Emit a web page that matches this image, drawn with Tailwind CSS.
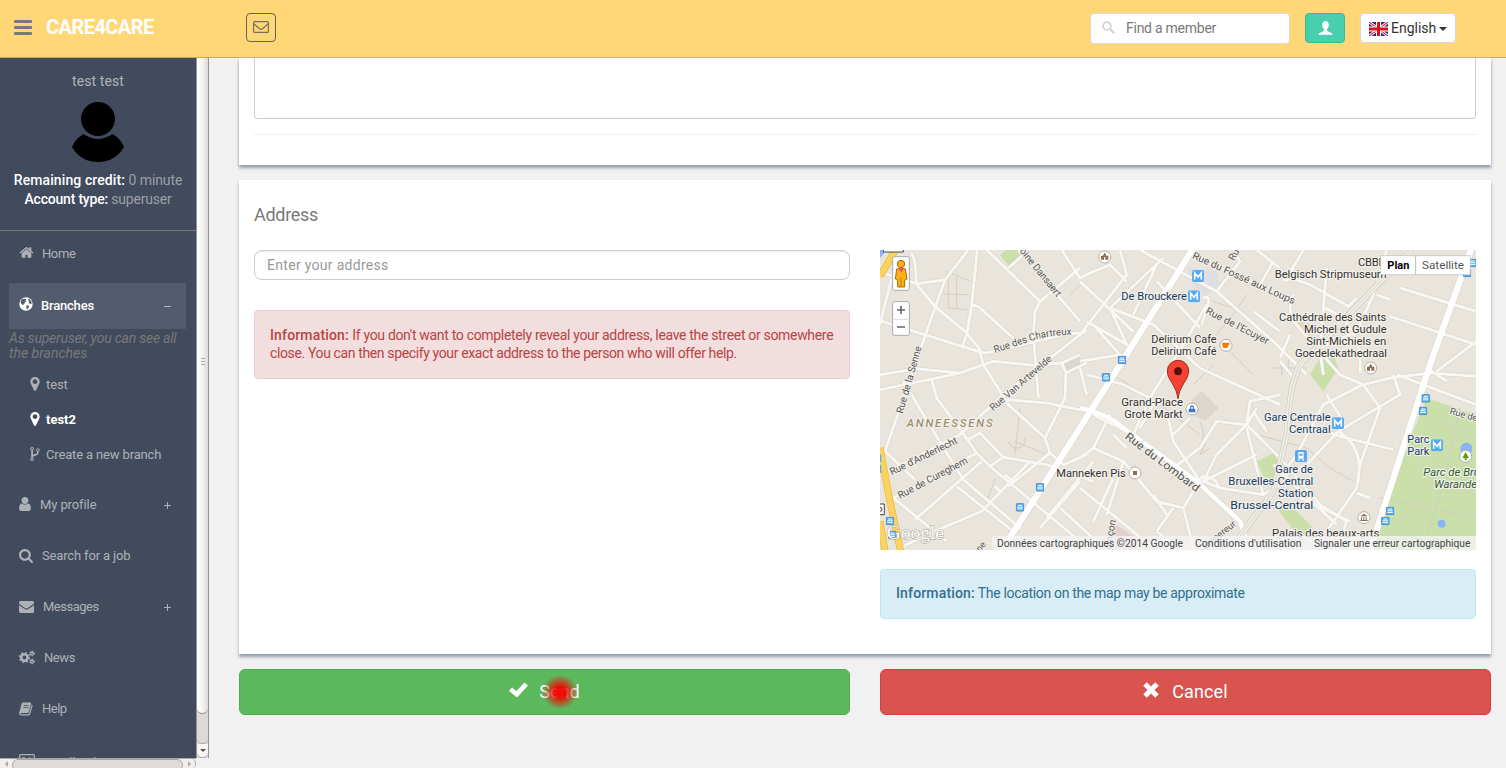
<!DOCTYPE html>
<html lang="en">
<head>
<meta charset="utf-8">
<title>Care4Care</title>
<script src="https://cdn.jsdelivr.net/npm/@tailwindcss/browser@4"></script>
</head>
<body class="h-[768px] w-[1506px] overflow-hidden bg-[#f1f1f1] font-[Roboto,sans-serif] text-sm text-[#797979]">
<svg class="hidden">
  <defs>
    <symbol id="home" viewBox="0 128 1792 1536"><path d="M1472 992v480q0 26-19 45t-45 19h-384v-384h-256v384h-384q-26 0-45-19t-19-45v-480q0-1 .5-3t.5-3l575-474 575 474q1 2 1 6zm223-69l-62 74q-8 9-21 11h-3q-13 0-21-7l-692-577-692 577q-12 8-24 7-13-2-21-11l-62-74q-8-10-7-23.5t11-21.5l719-599q32-26 76-26t76 26l244 204v-195q0-14 9-23t23-9h192q14 0 23 9t9 23v408l219 182q10 8 11 21.5t-7 23.5z"/></symbol>
    <symbol id="marker" viewBox="384 128 1024 1536"><path d="M1152 640q0-106-75-181t-181-75-181 75-75 181 75 181 181 75 181-75 75-181zm256 0q0 109-33 179l-364 774q-16 33-47.500 52t-67.500 19-67.500-19-46.500-52l-365-774q-33-70-33-179 0-212 150-362t362-150 362 150 150 362z"/></symbol>
    <symbol id="fork" viewBox="384 128 1024 1536"><path d="M672 1472q0-40-28-68t-68-28-68 28-28 68 28 68 68 28 68-28 28-68zm0-1152q0-40-28-68t-68-28-68 28-28 68 28 68 68 28 68-28 28-68zm640 128q0-40-28-68t-68-28-68 28-28 68 28 68 68 28 68-28 28-68zm96 0q0 52-26 96.500t-70 69.500q-2 287-226 414-67 38-203 81-128 40-169.500 71t-41.500 100v26q44 25 70 69.500t26 96.500q0 80-56 136t-136 56-136-56-56-136q0-52 26-96.500t70-69.500v-820q-44-25-70-69.500t-26-96.500q0-80 56-136t136-56 136 56 56 136q0 52-26 96.500t-70 69.500v497q54-26 154-57 55-17 87.500-29.500t70.500-31 59-39.500 40.500-51 28-69.500 8.500-91.500q-44-25-70-69.500t-26-96.500q0-80 56-136t136-56 136 56 56 136z"/></symbol>
    <symbol id="user" viewBox="256 128 1280 1536"><path d="M1536 1399q0 109-62.500 187t-150.500 78h-854q-88 0-150.500-78t-62.500-187q0-85 8.500-160.500t31.500-152 58.500-131 94-89 134.500-34.500q131 128 313 128t313-128q76 0 134.500 34.500t94 89 58.500 131 31.500 152 8.500 160.500zm-256-887q0 159-112.500 271.500t-271.500 112.500-271.500-112.500-112.500-271.500 112.500-271.500 271.500-112.500 271.500 112.500 112.500 271.500z"/></symbol>
    <symbol id="search" viewBox="64 128 1664 1664"><path d="M1216 832q0-185-131.500-316.500t-316.500-131.500-316.500 131.500-131.500 316.500 131.500 316.500 316.500 131.500 316.500-131.500 131.500-316.500zm512 832q0 52-38 90t-90 38q-54 0-90-38l-343-342q-179 124-399 124-143 0-273.500-55.500t-225-150-150-225-55.500-273.500 55.500-273.500 150-225 225-150 273.500-55.500 273.500 55.500 225 150 150 225 55.500 273.500q0 220-124 399l343 343q37 37 37 90z"/></symbol>
    <symbol id="envelope" viewBox="0 256 1792 1408"><path d="M1792 710v794q0 66-47 113t-113 47h-1472q-66 0-113-47t-47-113v-794q44 49 101 87 362 246 497 345 57 42 92.500 65.500t94.500 48 110 24.500h2q51 0 110-24.500t94.500-48 92.500-65.500q170-123 498-345 57-39 100-87zm0-294q0 79-49 151t-122 123q-376 261-468 325-10 7-42.500 31t-54 38.500-52 32.500-57.500 27-50 9h-2q-23 0-50-9t-57.500-27-52-32.500-54-38.500-42.500-31q-91-64-262-182.500t-205-142.500q-62-42-117-115.500t-55-136.500q0-78 41.500-130t118.500-52h1472q65 0 112.500 47t47.500 113z"/></symbol>
    <symbol id="globe" viewBox="0 0 14 14"><circle cx="7" cy="7" r="6.700"/><path fill="#535b6e" d="M2.600 2.600 4 1.700l1.200.4 1-.6 1.100.7-.9 1 .9.900-1.500 1.400-.2 1.200-1.300.3.400 1.100L3.600 8 2 6.200 1.700 4.200zM8.800 2l1.900.2 1.600 2 .5 2.300-1.600.4-1.300-.9-.3-1.400 1-.9L9 3.100zM7.400 8.300l1.800.2.900 1-1 2-1.300 1-.5-2.200z"/></symbol>
    <symbol id="cogs" viewBox="0 0 16 14"><g fill="none" stroke="currentColor"><circle cx="5.400" cy="7" r="3.200" stroke-width="2.600"/><circle cx="5.400" cy="7" r="4.900" stroke-width="1.300" stroke-dasharray="1.900 1.950"/><circle cx="13" cy="3" r="1.500" stroke-width="1.300"/><circle cx="13" cy="3" r="2.400" stroke-width=".8" stroke-dasharray="1.250 1.250"/><circle cx="13" cy="11" r="1.500" stroke-width="1.300"/><circle cx="13" cy="11" r="2.400" stroke-width=".8" stroke-dasharray="1.250 1.250"/></g></symbol>
    <symbol id="book" viewBox="0 0 14 14"><path fill-rule="evenodd" d="M4.200.5h7.200q1 0 .7 1L9.700 10q-.3 1-1.300 1H2q-.8 0-.6.700.2.600 1 .6h6.700q.7 0 .9-.7l2.500-8.300q.1-.4 0-.8 1.400.4 1 1.600L11.200 12q-.4 1.400-1.800 1.400H2q-1.500 0-1.900-1.600-.1-.6.100-1.100L2.600 1.800Q3 .5 4.200.5zM5 3.300 4.800 4.100h5L10 3.300zM4.400 5.300l-.2.800h5l.2-.8z"/></symbol>
    <symbol id="stop" viewBox="0 0 8 8"><rect x=".4" y=".4" width="7.200" height="7.200" rx="1" fill="#5aabf0" stroke="#3c85c9" stroke-width=".7"/><path d="M2.300 2.200h3.600M1.500 3.800h5M1.500 5.400h5" stroke="#fff" stroke-width=".9"/></symbol>
    <symbol id="metro" viewBox="0 0 12 12"><rect width="12" height="12" rx="2" fill="#55a9f5"/><path d="M2.700 9.400V3l3.300 4 3.300-4v6.400" fill="none" stroke="#fff" stroke-width="1.700"/></symbol>
  </defs>
</svg>

<header class="flex h-[58px] items-start border-b border-[#c9a953] bg-[#ffd777]">
  <div class="flex w-[246px] items-center pt-[13px] pl-3.5">
    <svg class="h-[15px] w-[18px] fill-[#797979]" viewBox="0 0 18 15"><rect y="0" width="18" height="3" rx="1"/><rect y="6" width="18" height="3" rx="1"/><rect y="12" width="18" height="3" rx="1"/></svg>
    <span class="ml-3.5 text-xl leading-7 font-bold tracking-[-0.55px] text-white">CARE4CARE</span>
  </div>
  <button class="mt-[13px] flex h-[29px] w-[30px] items-center justify-center rounded border border-[#66634f]">
    <svg class="mb-0.5 h-3 w-4" viewBox="0 0 16 12" fill="none" stroke="#74705c" stroke-width="1.200"><rect x=".6" y=".6" width="14.800" height="10.800" rx="1"/><path d="M1 3l5.500 4.800q1.500 1 3 0L15 3"/></svg>
  </button>
  <div class="mt-[13px] ml-auto flex h-[31px] w-[200px] items-center rounded border border-[#d9d9de] bg-white pl-[11px]">
    <svg class="mb-0.5 size-[13px]" viewBox="0 0 13 13" fill="none" stroke="#d0d0d0"><circle cx="5" cy="5" r="3.900" stroke-width="1.700"/><path d="M8 8l4 4" stroke-width="2.300"/></svg>
    <span class="mb-0.5 ml-[11px] tracking-[-0.25px]">Find a member</span>
  </div>
  <button class="mt-[13px] ml-[15px] flex h-[30px] w-10 items-center justify-center rounded-sm border border-[#3ab99a] bg-[#48cfad]">
    <svg class="h-3.5 w-[15px] fill-white" viewBox="0 0 15 14"><path d="M7.500 0c2 0 3.300 1.500 3.300 3.700 0 1.800-.7 3.500-1.700 4.400v1.200c0 .8 1 1.200 2.700 1.900 1.800.7 2.800 1.300 2.800 2.600H.4c0-1.300 1-1.900 2.800-2.600 1.700-.7 2.700-1.100 2.700-1.900V8.100c-1-.9-1.700-2.600-1.700-4.400C4.200 1.500 5.500 0 7.500 0z"/></svg>
  </button>
  <button class="mt-[13px] mr-[50px] ml-[15px] flex h-[30px] w-24 items-center rounded border border-[#d6d6dc] bg-white pl-2 text-[#333]">
    <svg class="mt-0.5 h-3.5 w-[19px]" viewBox="0 0 19 14"><path fill="#1c2a7a" d="M0 0h19v14H0z"/><path d="M0 0l19 14M19 0L0 14" stroke="#fff" stroke-width="3"/><path d="M0 0l19 14M19 0L0 14" stroke="#d32a3a" stroke-width="1.100"/><path d="M9.500 0v14M0 7h19" stroke="#fff" stroke-width="5"/><path d="M9.500 0v14M0 7h19" stroke="#d9101c" stroke-width="3"/></svg>
    <span class="ml-[3px]">English</span>
    <span class="mt-0.5 ml-[3px] border-x-4 border-t-4 border-x-transparent border-t-[#333]"></span>
  </button>
</header>

<div class="flex h-[710px]">
  <aside class="flex w-[209px] shrink-0 flex-col">
    <div class="flex h-[700px]">
      <div class="h-[700px] w-[196px] overflow-hidden bg-[#424a5d] text-[13px] text-[#aeb2b7]">
        <div class="flex h-[173px] flex-col items-center border-b border-[#797979] pt-3.5 text-sm">
          <span class="leading-[18px] tracking-[0.1px]">test test</span>
          <svg class="mt-3 h-[60px] w-[54px]" viewBox="0 0 54 60"><circle cx="27" cy="17" r="17"/><path d="M12.500 32Q27 42 41.500 32 50 37 53 45 44 60 27 60T1 45Q4 37 12.500 32z"/></svg>
          <p class="mt-[9px] h-[19px] leading-[19px] text-[#9b9fa8]"><b class="font-medium tracking-[0.1px] text-white">Remaining credit:</b> <span class="tracking-[-0.1px]">0 minute</span></p>
          <p class="h-[19px] leading-[19px] tracking-[-0.2px] text-[#9b9fa8]"><b class="font-medium text-white">Account type:</b> superuser</p>
        </div>
        <nav class="px-[9px] [&_svg]:shrink-0">
          <a class="flex h-[46px] items-center pl-2.5"><svg class="mb-1 h-[13px] w-[15px] fill-current"><use href="#home"/></svg><span class="ml-2 tracking-[-0.4px]">Home</span></a>
          <a class="mt-1.5 mr-px flex h-[46px] items-center bg-[#535b6e] pl-2.5 text-white"><svg class="mb-1 size-3.5 fill-current"><use href="#globe"/></svg><span class="ml-2 font-medium tracking-[-0.2px]">Branches</span><span class="mr-[15px] ml-auto h-px w-[7px] bg-[#aeb2b7]"></span></a>
          <p class="mt-0.5 text-sm leading-[15px] whitespace-nowrap text-[#797979] italic"><span class="tracking-[-0.23px]">As superuser, you can see all</span><br>the branches</p>
          <a class="mt-[7px] flex h-[35px] items-center pl-[21px]"><svg class="mb-1 h-[14px] w-[10px] fill-current"><use href="#marker"/></svg><span class="ml-1.5 tracking-[-0.1px]">test</span></a>
          <a class="flex h-[35px] items-center pl-[21px] text-white"><svg class="mb-1 h-[14px] w-[10px] fill-current"><use href="#marker"/></svg><span class="ml-1.5 font-bold">test2</span></a>
          <a class="flex h-[35px] items-center pl-[21px]"><svg class="mb-1 h-[14px] w-[10px] fill-current"><use href="#fork"/></svg><span class="ml-1.5 tracking-[-0.15px]">Create a new branch</span></a>
          <a class="mt-[7px] flex h-[51px] items-center pl-2.5"><svg class="mb-1 h-3.5 w-3 fill-current"><use href="#user"/></svg><span class="ml-[9px] tracking-[-0.1px]">My profile</span><svg class="mr-4 ml-auto size-[7px]" viewBox="0 0 7 7" stroke="currentColor"><path d="M3.500 0v7M0 3.500h7"/></svg></a>
          <a class="flex h-[51px] items-center pl-2.5"><svg class="mb-0.5 size-3.5 fill-current"><use href="#search"/></svg><span class="ml-[9px] tracking-[-0.15px]">Search for a job</span></a>
          <a class="flex h-[51px] items-center pl-2.5"><svg class="mb-0.5 h-3 w-[15px] fill-current"><use href="#envelope"/></svg><span class="ml-[9px] tracking-[-0.5px]">Messages</span><svg class="mr-4 ml-auto size-[7px]" viewBox="0 0 7 7" stroke="currentColor"><path d="M3.500 0v7M0 3.500h7"/></svg></a>
          <a class="flex h-[51px] items-center pl-2.5"><svg class="mb-0.5 h-[15px] w-4"><use href="#cogs"/></svg><span class="ml-[9px] tracking-[-0.4px]">News</span></a>
          <a class="flex h-[51px] items-center pl-2.5"><svg class="mb-0.5 size-3.5 fill-current"><use href="#book"/></svg><span class="ml-[9px] tracking-[-0.5px]">Help</span></a>
          <a class="flex h-[51px] items-center pl-2.5"><svg class="h-3.5 w-4" viewBox="0 0 16 14" fill="none" stroke="currentColor" stroke-width="1.300"><rect x=".7" y=".7" width="14.600" height="12" rx="1"/><path d="M3 4h3M11 3v3"/></svg><span class="mt-[5px] ml-[9px]">Feedback</span></a>
        </nav>
      </div>
      <div class="flex w-[13px] flex-col border-x border-[#989390] bg-[#dcdad8]">
        <div class="flex h-[656px] items-center justify-center rounded-b-lg border-b border-[#989390] bg-linear-to-r from-white via-[#f4f3f2] to-[#dcdad7]">
          <div class="mb-12 h-[7px] w-1 border-y border-[#aaa] pt-0.5"><div class="h-px bg-[#aaa]"></div></div>
        </div>
        <div class="h-[30px] rounded-b-lg border-b border-[#aaa6a2]"></div>
        <div class="flex flex-1 items-center justify-center rounded-b-lg border-b border-[#aaa6a2] bg-[#f7f6f5]"><span class="border-x-[3px] border-t-[3px] border-x-transparent border-t-[#555]"></span></div>
      </div>
    </div>
    <div class="flex h-2.5 w-[196px] overflow-hidden border-t border-[#aaa6a2] bg-[#f1f0ef]">
      <div class="flex w-3 items-center justify-center"><span class="border-y-[3px] border-r-[3px] border-y-transparent border-r-[#aaa]"></span></div>
      <div class="h-3 flex-1 rounded-lg border border-[#aaa6a2] bg-[#dfdddb]"></div>
      <div class="flex w-[13px] items-center justify-center rounded-r-lg border-r border-[#aaa6a2]"><span class="border-y-[3px] border-l-[3px] border-y-transparent border-l-[#aaa]"></span></div>
    </div>
  </aside>

  <main class="flex min-w-0 flex-1 flex-col pr-[15px] pl-[30px]">
    <section class="h-[107px] bg-white px-[15px] shadow-[0_3px_3px_#959faf,0_0_2px_#c9ced6]">
      <div class="h-[61px] rounded-b border border-t-0 border-[#ccc]"></div>
      <hr class="mt-[15px] border-[#eeeff5]">
    </section>
    <section class="mt-[15px] grid h-[474px] grid-cols-2 gap-[30px] bg-white px-[15px] shadow-[0_3px_3px_#959faf]">
      <div class="min-w-0 pt-[22px]">
        <h3 class="text-lg leading-[26px] tracking-[-0.3px]">Address</h3>
        <div class="mt-[22px] flex h-[30px] items-center rounded-lg border border-[#ccc] pl-3 tracking-[0.3px] text-[#999] shadow-[inset_0_1px_1px_#00000013]">Enter your address</div>
        <div class="mt-[30px] h-[69px] rounded border border-[#ebccd1] bg-[#f2dede] px-[15px] pt-[15px] leading-[18px] whitespace-nowrap text-[#b94442]"><b class="font-medium tracking-[0.15px]">Information:</b> <span class="tracking-[-0.32px]">If you don't want to completely reveal your address, leave the street or somewhere</span><br><span class="tracking-[-0.37px]">close. You can then specify your exact address to the person who will offer help.</span></div>
      </div>
      <div class="min-w-0 pt-[70px]">
        <svg class="h-[300px] w-[596px] bg-[#e9e5dc]" viewBox="0 6 1788 900" font-family="Roboto, sans-serif">
          <g>
            <path fill="#cadfaa" d="M360 22 378 6h37l10 14-38 35zM1290 380l30-50h43l12 30-45 70zM1640 450l148 50V906h-330zM1130 640l50-25 30 50-20 40-40-20zM1190 780l30-20 80 80-40 30z"/>
            <path fill="#e3cfce" d="M700 825l70 45v36h-70z"/><path fill="#dedfe3" d="M922 60l90 10 10 50-50 20-40-40z"/><path fill="#dcd6cd" d="M940 450l25-20 50 50-40 40-50-30zM550 345l50-20v35l-35 10zM1250 220l50 10-30 30z"/>
            <path fill="#e8d8a9" d="M1255 225l55 5-20 30z"/><path fill="#8ab4f8" d="M0 30 20 6H0z"/>
          </g>
          <g fill="none" stroke="#d5cec2" stroke-width="3">
            <path d="M195 70 270 98M205 95V180L262 185M230 85V180M190 138 265 140M420 480 405 620M385 580a25 25 0 1 0 50-10M405 580 500 620M345 690 315 780M940 410 1000 350M975 300 1060 200 1100 140M1000 160 1090 190M840 470 960 560M1000 530 960 620 990 600M1030 290 1120 380M900 650 870 700M1130 560 1280 600 1350 660 1420 700M1180 360h100M1205 340v40M1225 330v40M1500 750l288 60M1740 480 1690 700 1640 870M1510 890 1700 640M1660 520l128 40M1700 700 1788 740M700 380 790 440M960 520Q980 560 960 600M570 140 600 110"/>
          </g>
          <g fill="none" stroke="#d8d2c7" stroke-width="12" stroke-linejoin="round">
            <g id="roadlines">
              <path d="M0 72 110 107 195 95M92 15Q110 30 108 107L165 175 255 250 297 300 310 350 385 470 495 570 510 615 550 650 620 620M265 6 195 95 135 265 15 610 105 695M292 6 275 170 262 250 248 295M275 172Q295 172 305 185L400 270M0 218 300 312 320 315 560 258 600 255M0 380 110 362 240 375M0 425 240 375 340 340 460 352 545 345 600 320M320 6 480 160M415 6 600 220M385 60 430 20M480 160 600 60M480 160 465 190 460 260 475 450M620 245 370 440 240 560 15 675M545 345 558 375 555 450M558 375 620 345M545 6 600 90 640 70M155 395 170 450 245 550 290 615 330 655 600 880M0 230 35 90M70 400 200 615 250 695 420 840M265 575 300 555 370 628 500 650 640 700M370 628 330 655M40 750 290 615M40 750 200 880M105 815 305 640M230 715 400 850M60 900 150 855 305 790 450 640M495 570 555 450M380 455 500 465 600 485M510 615 385 715M375 680 400 700M345 715 365 735M600 700 480 840M540 780 650 880M640 640 500 810"/>
              <path d="M600 88 690 50 740 100M600 100 760 250M690 180 820 230 960 360 1200 470M690 180 850 30M690 180 740 290 620 220M760 200 830 50M600 260 740 80 720 6M780 6 1010 130 1180 280 1280 380M830 100 960 240M980 170 940 240 810 450 760 560 640 500M970 150Q990 140 985 170L965 230M810 450 730 410 620 380M600 340 720 320 640 230M1010 130 1080 40 1060 6M600 360 620 440M1130 6 1200 60M1200 250 1120 190M1180 40 1140 110 1020 60"/>
              <path d="M690 500 640 600 730 640 830 760 910 780 970 680M640 600 600 630M730 640 700 740 680 800M600 720 820 900M700 560 740 600M780 540 830 450M860 490 880 580 960 700M880 560 930 510M880 660 960 600 1010 520 1100 530M910 780 940 900M830 850 880 780M830 850 880 890M1010 620 970 700 1020 720 1150 740 1220 700M1020 720Q1000 680 970 690M970 700 1130 620M1010 620 1100 530 1130 480M1100 530 1200 630 1320 770 1400 820M1100 530 1110 460 1200 440M1100 540 1130 660 1150 740M1120 490 1160 550M820 740 860 800M640 820 700 690"/>
              <path d="M1270 6 1250 40 1210 100M1240 60 1220 100M1200 80 1290 110 1405 175 1430 150M1240 140Q1220 180 1240 220L1380 380 1450 410 1530 390 1650 375 1788 385M1340 60 1330 180 1320 310 1330 380M1335 180Q1450 230 1440 375M1320 300 1430 250 1480 140 1520 6M1200 330 1230 260M1250 400 1200 340M1490 140 1530 155M1530 205 1788 290M1560 120 1788 190M1670 370 1788 280M1640 360 1700 400M1450 410 1330 470 1250 620 1190 700M1450 410 1500 480 1440 650 1430 720 1340 850 1290 880M1375 550Q1460 600 1430 720M1290 530 1380 565 1540 605M1375 550 1560 440 1540 380M1375 550 1280 650 1200 690M1430 735 1470 750M1200 720 1410 820M1180 650 1370 830M1550 380 1788 470M1390 520 1340 440M1400 820 1370 906"/>
            </g>
            <path stroke-width="22" d="M940 0 730 335 370 900M1775 0 1650 350 1440 1000"/><path stroke-width="17" d="M600 480Q690 500 730 540L950 700 1080 820 1110 906"/>
          </g>
          <use href="#roadlines" fill="none" stroke="#f9f7f3" stroke-width="9"/>
          <g fill="none" stroke="#fff"><path stroke-width="19" d="M940 0 730 335 370 900M1775 0 1650 350 1440 1000"/><path stroke-width="14" d="M600 480Q690 500 730 540L950 700 1080 820 1110 906"/></g>
          <g fill="none" stroke-width="2"><path stroke="#cfcbc1" stroke-width="18" d="M1600 0 1260 350Q1230 400 1220 560L1180 730 1050 906"/><path stroke="#f0ede6" stroke-width="14" d="M1600 0 1260 350Q1230 400 1220 560L1180 730 1050 906"/><path stroke="#c9c5bb" d="M1600 0 1260 350Q1230 400 1220 560L1180 730 1050 906"/></g>
          <g fill="none"><path stroke="#e0b84a" stroke-width="21" d="M50 0 0 85M0 600 28 750 62 910M0 820 15 910"/><path stroke="#fcd45c" stroke-width="17" d="M50 0 0 85M0 600 28 750 62 910M0 820 15 910"/></g>
          <circle cx="1759" cy="602" r="18" fill="#8ab4f8"/><circle cx="1685" cy="827" r="12" fill="#8ab4f8"/>
          <g>
            <use href="#stop" x="713" y="323" width="26" height="26"/><use href="#stop" x="665" y="375" width="26" height="26"/><use href="#stop" x="467" y="705" width="26" height="26"/><use href="#stop" x="407" y="765" width="26" height="26"/><use href="#stop" x="17" y="806" width="26" height="26"/><use href="#stop" x="24" y="848" width="26" height="26"/><use href="#stop" x="1765" y="32" width="26" height="26"/><use href="#stop" x="1748" y="62" width="26" height="26"/><use href="#stop" x="1624" y="438" width="26" height="26"/><use href="#stop" x="1616" y="476" width="26" height="26"/><use href="#stop" x="1517" y="776" width="26" height="26"/><use href="#stop" x="1503" y="806" width="26" height="26"/><path fill="#5aabf0" d="M0 620h4v22H0zM0 652h4v22H0z"/>
            <use href="#metro" x="936" y="66" width="36" height="36"/><use href="#metro" x="924" y="127" width="36" height="36"/><use href="#metro" x="1356" y="508" width="36" height="36"/><use href="#metro" x="1653" y="574" width="36" height="36"/>
            <rect x="1245" y="606" width="36" height="36" rx="6" fill="#55a9f5"/><path fill="#fff" fill-rule="evenodd" d="M1255 612h16v20h-16zM1258 617h10v6h-10zM1254 634h5v4h-5zM1267 634h5v4h-5z"/>
          </g>
          <g fill="#fff" stroke="#b5afa6" stroke-width="3"><circle cx="674" cy="27" r="18"/><circle cx="1038" cy="292" r="18"/><circle cx="1472" cy="360" r="18"/><circle cx="936" cy="483" r="18"/><circle cx="765" cy="675" r="18"/><circle cx="1452" cy="809" r="18"/><circle cx="1757" cy="625" r="18"/></g>
          <g fill="#8d6e53"><path d="M663 35V25l4-3 2 3 2-7 3-4 3 4 2 7 2-3 4 3v10h-9v-7h-4v7zM1461 368v-10l4-3 2 3 2-7 3-4 3 4 2 7 2-3 4 3v10h-9v-7h-4v7z"/><path fill="#f57c00" d="M1027 284h22v6h-4q0 10-8 10h-3q-7 0-7-10z"/><path d="M759 669h12v12h-12zM1441 805l11-8 11 8zM1443 807h3v9h-3zM1450 807h3v9h-3zM1457 807h3v9h-3zM1441 816h22v3h-22z"/><path fill="#3f77c6" fill-rule="evenodd" d="M926 482h4q0-10 6-10t6 10h4v11h-20zM933 482h6q0-6-3-6t-3 6z"/><path fill="#5c9e12" d="M1757 612l10 18h-7v7h-6v-7h-7z"/></g>
          <g fill="#555" font-size="30" stroke="#f3f0ea" stroke-width="6" paint-order="stroke" stroke-linejoin="round">
            <text transform="translate(418 10) rotate(51)" textLength="178" lengthAdjust="spacingAndGlyphs">oine Dansaert</text>
            <path id="chartreux" d="M345 315 450 280Q500 262 580 260" fill="none" stroke="none"/>
            <text textLength="238" lengthAdjust="spacingAndGlyphs"><textPath href="#chartreux">Rue des Chartreux</textPath></text>
            <text transform="translate(68 498) rotate(-74)" textLength="208" lengthAdjust="spacingAndGlyphs">Rue de la Senne</text>
            <text transform="translate(340 490) rotate(-41)" textLength="235" lengthAdjust="spacingAndGlyphs">Rue Van Artevelde</text>
            <text transform="translate(35 682) rotate(-26)" textLength="222" lengthAdjust="spacingAndGlyphs">Rue d'Anderlecht</text>
            <text transform="translate(60 753) rotate(-28)" textLength="232" lengthAdjust="spacingAndGlyphs">Rue de Cureghem</text>
            <text transform="translate(935 30) rotate(24.500)" textLength="335" lengthAdjust="spacingAndGlyphs">Rue du Fossé aux Loups</text>
            <text transform="translate(975 195) rotate(27)" textLength="208" lengthAdjust="spacingAndGlyphs">Rue de l'Ecuyer</text>
            <text transform="translate(1062 40) rotate(-62)">Rue</text>
            <text transform="translate(733 570) rotate(37)" font-size="33" textLength="270" lengthAdjust="spacingAndGlyphs">Rue du Lombard</text>
            <text transform="translate(692 906) rotate(-80)" font-size="30">oinçon</text>
            <text transform="translate(975 905) rotate(-38)" font-size="28">Empereur</text>
            <text transform="translate(1708 497) rotate(16)" font-size="28">Rue de</text>
            <text transform="translate(290 925) rotate(-50)" font-size="28">nne</text>
          </g>
          <g fill="#333" font-size="34" stroke="#f3f0ea" stroke-width="7" paint-order="stroke" stroke-linejoin="round">
            <text x="814" y="284" textLength="196" lengthAdjust="spacingAndGlyphs">Delirium Cafe</text><text x="814" y="320" textLength="196" lengthAdjust="spacingAndGlyphs">Delirium Café</text>
            <text x="724" y="475" textLength="185" lengthAdjust="spacingAndGlyphs">Grand-Place</text><text x="733" y="510" textLength="175" lengthAdjust="spacingAndGlyphs">Grote Markt</text>
            <text x="529" y="686" textLength="208" lengthAdjust="spacingAndGlyphs">Manneken Pis</text>
            <text x="1434" y="54" textLength="84">CBBD</text><text x="1184" y="90" textLength="336" lengthAdjust="spacingAndGlyphs">Belgisch Stripmuseum</text>
            <text x="1197" y="218" textLength="322" lengthAdjust="spacingAndGlyphs">Cathédrale des Saints</text><text x="1272" y="254" textLength="248" lengthAdjust="spacingAndGlyphs">Michel et Gudule</text><text x="1279" y="290" textLength="240" lengthAdjust="spacingAndGlyphs">Sint-Michiels en</text><text x="1245" y="326" textLength="276" lengthAdjust="spacingAndGlyphs">Goedelekathedraal</text>
            <text x="1176" y="866" textLength="322" lengthAdjust="spacingAndGlyphs">Palais des beaux-arts</text>
            <g fill="#163c66"><text x="724" y="156" textLength="197" lengthAdjust="spacingAndGlyphs">De Brouckere</text><text x="1152" y="518" textLength="200" lengthAdjust="spacingAndGlyphs">Gare Centrale</text><text x="1227" y="554" textLength="125" lengthAdjust="spacingAndGlyphs">Centraal</text><text x="1582" y="585" textLength="66" lengthAdjust="spacingAndGlyphs">Parc</text><text x="1582" y="621" textLength="66" lengthAdjust="spacingAndGlyphs">Park</text><text x="1186" y="674" textLength="112" lengthAdjust="spacingAndGlyphs">Gare de</text><text x="1045" y="710" textLength="255" lengthAdjust="spacingAndGlyphs">Bruxelles-Central</text><text x="1194" y="746" textLength="106" lengthAdjust="spacingAndGlyphs">Station</text><text x="1051" y="782" textLength="249" lengthAdjust="spacingAndGlyphs">Brussel-Central</text></g>
            <g fill="#2e5c2a" font-style="italic"><text x="1630" y="683">Parc de Bruxelles</text><text x="1662" y="719">Warandepark</text></g>
            <text x="80" y="537" fill="#9d9072" font-style="italic" font-weight="500" textLength="258">ANNEESSENS</text>
          </g>
          <path fill="#fff" stroke="#444" stroke-width="3" d="M10-10h60v22H10zM-20 768h33v32h-33z"/><circle cx="0" cy="784" r="6" fill="none" stroke="#444" stroke-width="3"/>
          <text x="20" y="872" font-family="Liberation Serif, serif" font-size="56" fill="#fff" stroke="#a39f97" stroke-width="3" paint-order="stroke" textLength="172" lengthAdjust="spacingAndGlyphs">Google</text>
          <path fill="#f5f5f5" fill-opacity=".78" d="M336 864H1788v42H336z"/>
          <g fill="#444" font-size="33"><text x="351" y="896" textLength="558" lengthAdjust="spacingAndGlyphs">Données cartographiques ©2014 Google</text><text x="945" y="896" textLength="320" lengthAdjust="spacingAndGlyphs">Conditions d'utilisation</text><text x="1302" y="896" textLength="469" lengthAdjust="spacingAndGlyphs">Signaler une erreur cartographique</text></g>
          <path fill="#f44336" stroke="#a52714" stroke-width="3" d="M894 452Q892 430 878 408 862 385 862 369a32 32 0 0 1 64 0Q926 385 910 408 896 430 894 452z"/><circle cx="894" cy="370" r="12" fill="#5a0f0a"/>
          <g fill="#fff" stroke="#aaa" stroke-width="3"><rect x="38" y="26" width="50" height="101" rx="5"/><rect x="38" y="161" width="50" height="101" rx="5"/></g>
          <path stroke="#ccc" stroke-width="2" d="M42 214h42"/><path stroke="#666" stroke-width="5" d="M51 186h24M63 174v24M51 237h24"/>
          <g fill="#fbb116" stroke="#a8690a" stroke-width="3"><path d="M50 63q13-7 26 0l5 30-7 4v20H53V97l-7-4z"/><circle cx="63" cy="48" r="11"/></g><path fill="#e85a4f" d="M54 60h19l-9 14z"/><path stroke="#a8690a" stroke-width="2" d="M63 88v28"/>
          <path fill="#fff" stroke="#bbb" stroke-width="2" d="M1502 23h269v57h-269z"/><path stroke="#bbb" stroke-width="3" d="M1607 23v57"/>
          <text x="1522" y="63" font-size="33" font-weight="700" fill="#000" textLength="66" lengthAdjust="spacingAndGlyphs">Plan</text><text x="1626" y="63" font-size="33" fill="#565656" textLength="126" lengthAdjust="spacingAndGlyphs">Satellite</text>
        </svg>
        <div class="mt-[19px] flex h-[50px] items-center rounded border border-[#bce8f1] bg-[#d9edf7] px-[15px] pb-0.5 whitespace-nowrap text-[#31708f]"><b class="font-medium tracking-[0.15px]">Information:</b><span class="ml-[3px] tracking-[-0.33px]">The location on the map may be approximate</span></div>
      </div>
    </section>
    <div class="mt-[15px] grid grid-cols-2 gap-[30px] text-lg text-white">
      <button class="relative flex h-[46px] items-center justify-center rounded-md border border-[#4cae4c] bg-[#5cb85c]">
        <svg class="mb-1 h-4 w-[19px] fill-white" viewBox="0 0 19 16"><path d="M15.500.5 19 3.500 8 15.500 0 9l3-3.500 4.500 3.500z"/></svg><span class="ml-[11px]">Send</span>
        <span class="absolute top-0.5 left-[300px] size-10 rounded-full bg-[radial-gradient(circle,#f00_0%,#f00000e6_20%,#f0000000_62%)]"></span>
      </button>
      <button class="flex h-[46px] items-center justify-center rounded-md border border-[#d43f3a] bg-[#d9534f]">
        <svg class="mb-1 h-4 w-4" viewBox="0 0 16 16" stroke="#fff" stroke-width="5"><path d="M2 2l12 12M14 2L2 14"/></svg><span class="ml-[13px] tracking-[0.15px]">Cancel</span>
      </button>
    </div>
  </main>
</div>
</body>
</html>
